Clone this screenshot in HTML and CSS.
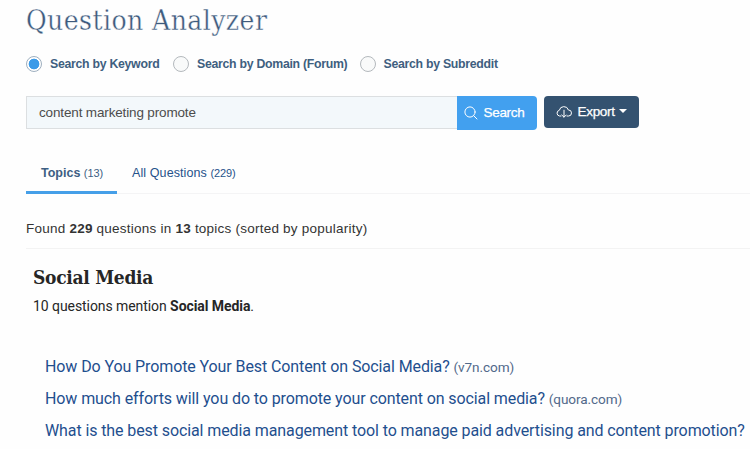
FILE: index.html
```html
<!DOCTYPE html>
<html lang="en">
<head>
<meta charset="utf-8">
<title>Question Analyzer</title>
<link rel="stylesheet" href="styles.css">
</head>
<body>
<main class="page">
  <h1 class="title">Question Analyzer</h1>
  <div class="modes">
    <label class="mode mode-keyword"><span class="radio radio-on"></span><span>Search by Keyword</span></label>
    <label class="mode mode-domain"><span class="radio"></span><span>Search by Domain (Forum)</span></label>
    <label class="mode mode-reddit"><span class="radio"></span><span>Search by Subreddit</span></label>
  </div>
  <div class="search">
    <div class="field"><span>content marketing promote</span></div>
    <button class="btn btn-search">
      <svg width="14" height="14" viewBox="0 0 14 14" fill="none" stroke="currentColor" stroke-linecap="round"><circle cx="6" cy="6" r="5.1"/><path d="M9.7 9.7 13 13"/></svg>
      <span>Search</span>
    </button>
    <button class="btn btn-export">
      <svg width="16" height="12" viewBox="0 0 16 12" fill="none" stroke="currentColor" stroke-linecap="round" stroke-linejoin="round"><path d="M5 10H3.6A2.9 2.9 0 0 1 3.3 4.3 4.7 4.7 0 0 1 12.4 4 3 3 0 0 1 12.6 10H11M8 4.2V11M5.8 9 8 11.2 10.2 9"/></svg>
      <span>Export</span><i class="caret"></i>
    </button>
  </div>
  <nav class="tabs">
    <a class="tab tab-on"><b>Topics</b> <small>(13)</small></a>
    <a class="tab tab-all"><span>All Questions</span> <small>(229)</small></a>
  </nav>
  <p class="found"><span>Found <b>229</b> questions in <b>13</b> topics (sorted by popularity)</span></p>
  <section class="topic">
    <h2 class="topic-name">Social Media</h2>
    <p class="mention">10 questions mention <b>Social Media</b>.</p>
    <ul class="questions">
      <li><a>How Do You Promote Your Best Content on Social Media?</a> <small>(v7n.com)</small></li>
      <li><a>How much efforts will you do to promote your content on social media?</a> <small>(quora.com)</small></li>
      <li><a>What is the best social media management tool to manage paid advertising and content promotion?</a></li>
    </ul>
  </section>
</main>
</body>
</html>
```
FILE: styles.css
```css
* { box-sizing: border-box; }
body { margin: 0; background: #fefefe; color: #333; font-family: "Liberation Sans", Arial, sans-serif; overflow: hidden; }
h1, h2, p, ul { margin: 0; padding: 0; }
.page { padding-left: 26px; height: 449px; overflow: hidden; }
.title { height: 52px; padding-top: 1px; font: 300 28px/40px "Roboto Slab", "DejaVu Serif", serif; font-stretch: condensed; letter-spacing: .42px; color: #3d5a7d; -webkit-text-stroke: .35px #fefefe; white-space: nowrap; }
.modes { display: flex; height: 24px; align-items: center; color: #3f5f80; font-size: 12.3px; letter-spacing: -.28px; font-weight: bold; white-space: nowrap; }
.mode { display: flex; align-items: center; gap: 8px; }
.mode-keyword { width: 147px; }
.mode-domain { width: 186.5px; }
.radio { width: 16px; height: 16px; flex: none; border: 1px solid #b4b9bd; border-radius: 50%; background: #f9fafa; }
.radio-on { background: radial-gradient(circle, #3c9be8 5px, #fff 5.7px); border-color: #9fb0c0; }
.search { display: flex; margin-top: 19.5px; height: 34px; }
.field { width: 431px; height: 33px; margin-top: .5px; padding-left: 12px; border: 1px solid #dcdfe1; border-right: 0; background: #f3f8fb; color: #4c4c4c; font-size: 13.5px; letter-spacing: -.15px; line-height: 32px; }
.btn { display: flex; align-items: center; border: 0; padding: 0; color: #fff; font-family: inherit; font-size: 13.5px; letter-spacing: -.3px; -webkit-text-stroke: .25px currentColor; }
.btn-search { width: 79.5px; height: 34px; padding-left: 7px; gap: 5.5px; background: #42a0ef; border-radius: 0 4px 4px 0; }
.btn-export { width: 95.5px; height: 32.5px; margin-left: 7px; padding-left: 12px; background: #345270; border-radius: 4px; }
.btn-export svg { margin-right: 6px; }
.caret { margin: -1px 0 0 4px; border: 4px solid transparent; border-top-color: #fff; border-bottom: 0; }
.tabs { display: flex; margin-top: 23.5px; height: 41px; border-bottom: 1px solid #f4f4f5; color: #25528a; font-size: 12.5px; line-height: 40px; white-space: nowrap; }
.tab { height: 41px; padding: 0 15px; }
.tab-on { width: 91px; color: #3d5f83; border-bottom: 3px solid #459fe8; }
.tab-all span { letter-spacing: .1px; }
.tab small { font-size: 11px; letter-spacing: -.1px; }
.found { height: 55px; padding-top: 15px; line-height: 40px; border-bottom: 1px solid #f3f3f3; font-size: 13.5px; letter-spacing: .23px; white-space: nowrap; }
.topic { padding-left: 7px; color: #262626; font-family: Roboto, sans-serif; }
.topic-name { height: 43px; padding-top: 8px; font: 700 19px/40px "Roboto Slab", "DejaVu Serif", serif; font-stretch: condensed; letter-spacing: -.28px; white-space: nowrap; }
.mention { height: 58.6px; font-size: 14px; letter-spacing: -.07px; line-height: 29px; }
.questions { padding-left: 12px; list-style: none; color: #1f4f8e; font-size: 16px; letter-spacing: -.1px; line-height: 32.4px; white-space: nowrap; }
.questions small { color: #52698a; font-size: 13.6px; }
```
